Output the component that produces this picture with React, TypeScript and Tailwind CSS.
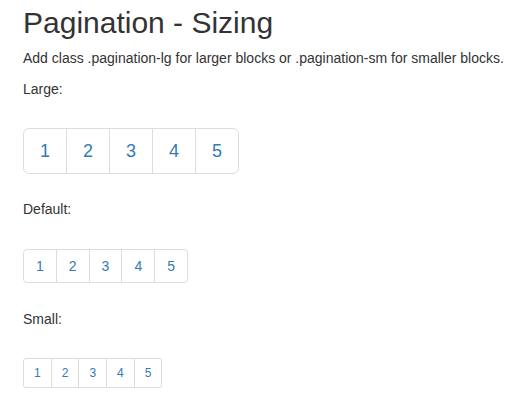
import React from 'react';

const pages = [1, 2, 3, 4, 5];

type Size = 'lg' | 'md' | 'sm';

const sizeClasses: Record<Size, { wrap: string; cell: string }> = {
    lg: { wrap: 'rounded-[6px]', cell: 'px-4 py-[10px] text-[18px] leading-[24px]' },
    md: { wrap: 'rounded-[4px]', cell: 'px-3 py-[6px] text-[14px] leading-5' },
    sm: { wrap: 'rounded-[3px]', cell: 'px-[10px] py-[5px] text-[12px] leading-[18px]' },
};

const Pagination: React.FC<{ size: Size; className?: string }> = ({ size, className }) => {
    const s = sizeClasses[size];
    return (
        <div className={`inline-flex border border-[#ddd] bg-white overflow-hidden ${s.wrap} ${className ?? ''}`}>
            {pages.map((p, i) => (
                <a
                    key={p}
                    href="#"
                    className={`block text-[#337ab7] hover:bg-[#eee] ${s.cell} ${i > 0 ? 'border-l border-[#ddd]' : ''}`}
                >
                    {p}
                </a>
            ))}
        </div>
    );
};

export default function App() {
    return (
        <div className="min-h-screen bg-white pl-[23px] pt-[6px] text-[#333] font-['Liberation_Sans',Arial,sans-serif]">
            <h2 className="text-[30px] leading-[33px] font-normal">Pagination - Sizing</h2>
            <p className="mt-[9px] text-[14px] leading-5">
                Add class .pagination-lg for larger blocks or .pagination-sm for smaller blocks.
            </p>

            <p className="mt-[11px] text-[14px] leading-5">Large:</p>
            <div className="mt-[29px]">
                <Pagination size="lg" />
            </div>

            <p className="mt-[25px] text-[14px] leading-5">Default:</p>
            <div className="mt-[30px] flex">
                <Pagination size="md" />
            </div>

            <p className="mt-[26px] text-[14px] leading-5">Small:</p>
            <div className="mt-[29px] flex">
                <Pagination size="sm" />
            </div>
        </div>
    );
}
